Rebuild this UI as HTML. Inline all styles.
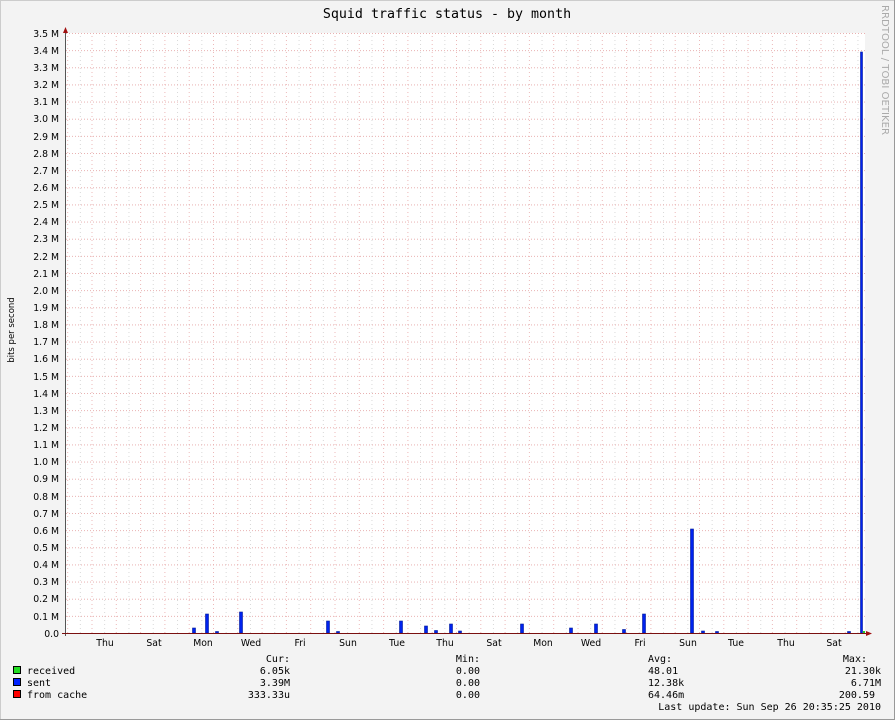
<!DOCTYPE html>
<html><head><meta charset="utf-8"><style>
html,body{margin:0;padding:0;width:895px;height:720px;overflow:hidden;background:#f3f3f3}
svg{display:block}
.m{font-family:"DejaVu Sans Mono","Liberation Mono",monospace;font-size:10px;fill:#000}
.s{font-family:"DejaVu Sans","Liberation Sans",sans-serif;font-size:9.3px;fill:#000}
</style></head><body>
<svg width="895" height="720" viewBox="0 0 895 720" xmlns="http://www.w3.org/2000/svg">
<defs>
<pattern id="vmin" patternUnits="userSpaceOnUse" x="79.85" y="0" width="24.3" height="4">
<line x1="0.5" y1="0" x2="0.5" y2="1" stroke="#d8d8d8" stroke-width="1"/>
</pattern>
<pattern id="vmaj" patternUnits="userSpaceOnUse" x="91.5" y="0" width="24.3" height="4">
<line x1="0.5" y1="0" x2="0.5" y2="1" stroke="#ecb8b8" stroke-width="1"/>
</pattern>
<pattern id="hmaj" patternUnits="userSpaceOnUse" x="0" y="33" width="3" height="17.1428">
<line x1="0" y1="0.5" x2="1" y2="0.5" stroke="#e8b0b0" stroke-width="1"/>
</pattern>
</defs>
<rect x="0" y="0" width="895" height="720" fill="#f3f3f3"/>
<rect x="0.5" y="0.5" width="894" height="719" fill="none" stroke="#cccccc"/>
<line x1="894.5" y1="0" x2="894.5" y2="720" stroke="#999"/>
<line x1="0" y1="719.5" x2="895" y2="719.5" stroke="#999"/>
<rect x="66" y="33" width="799" height="600" fill="#fff"/>
<rect x="66" y="33" width="799" height="600" fill="url(#vmin)"/>
<rect x="66" y="33" width="799" height="600" fill="url(#vmaj)"/>
<rect x="66" y="33" width="799" height="600" fill="url(#hmaj)"/>
<text class="m" x="447" y="18" text-anchor="middle" style="font-size:13.3px">Squid traffic status - by month</text>
<text transform="translate(882,5) rotate(90)" style="font-family:'DejaVu Sans',sans-serif;font-size:9.3px;fill:#aaa" textLength="130" lengthAdjust="spacingAndGlyphs">RRDTOOL / TOBI OETIKER</text>
<text transform="translate(14,330) rotate(-90)" text-anchor="middle" class="s" style="font-size:8.5px">bits per second</text>
<g class="s" text-anchor="end">
<text x="59" y="37">3.5 M</text><text x="59" y="54">3.4 M</text><text x="59" y="71">3.3 M</text><text x="59" y="88">3.2 M</text><text x="59" y="105">3.1 M</text><text x="59" y="122">3.0 M</text><text x="59" y="140">2.9 M</text><text x="59" y="157">2.8 M</text><text x="59" y="174">2.7 M</text><text x="59" y="191">2.6 M</text><text x="59" y="208">2.5 M</text><text x="59" y="225">2.4 M</text><text x="59" y="242">2.3 M</text><text x="59" y="260">2.2 M</text><text x="59" y="277">2.1 M</text><text x="59" y="294">2.0 M</text><text x="59" y="311">1.9 M</text><text x="59" y="328">1.8 M</text><text x="59" y="345">1.7 M</text><text x="59" y="362">1.6 M</text><text x="59" y="380">1.5 M</text><text x="59" y="397">1.4 M</text><text x="59" y="414">1.3 M</text><text x="59" y="431">1.2 M</text><text x="59" y="448">1.1 M</text><text x="59" y="465">1.0 M</text><text x="59" y="482">0.9 M</text><text x="59" y="500">0.8 M</text><text x="59" y="517">0.7 M</text><text x="59" y="534">0.6 M</text><text x="59" y="551">0.5 M</text><text x="59" y="568">0.4 M</text><text x="59" y="585">0.3 M</text><text x="59" y="602">0.2 M</text><text x="59" y="620">0.1 M</text><text x="59" y="637">0.0</text>
</g>
<g class="s" text-anchor="middle">
<text x="105" y="646">Thu</text><text x="154" y="646">Sat</text><text x="203" y="646">Mon</text><text x="251" y="646">Wed</text><text x="300" y="646">Fri</text><text x="348" y="646">Sun</text><text x="397" y="646">Tue</text><text x="445" y="646">Thu</text><text x="494" y="646">Sat</text><text x="543" y="646">Mon</text><text x="591" y="646">Wed</text><text x="640" y="646">Fri</text><text x="688" y="646">Sun</text><text x="736" y="646">Tue</text><text x="786" y="646">Thu</text><text x="834" y="646">Sat</text>
</g>
<g fill="#0022ee" stroke="#001a99" stroke-width="0.6">
<rect x="192.5" y="628" width="3" height="5"/>
<rect x="205.5" y="614" width="3" height="19"/>
<rect x="215.5" y="631.5" width="3" height="1.5"/>
<rect x="239.5" y="612" width="3" height="21"/>
<rect x="326.5" y="621" width="3" height="12"/>
<rect x="336.5" y="631.5" width="3" height="1.5"/>
<rect x="399.5" y="621" width="3" height="12"/>
<rect x="424.5" y="626" width="3" height="7"/>
<rect x="434.5" y="630.5" width="3" height="2.5"/>
<rect x="449.5" y="624" width="3" height="9"/>
<rect x="458.5" y="631" width="3" height="2"/>
<rect x="520.5" y="624" width="3" height="9"/>
<rect x="569.5" y="628" width="3" height="5"/>
<rect x="594.5" y="624" width="3" height="9"/>
<rect x="622.5" y="629.5" width="3" height="3.5"/>
<rect x="642.5" y="614" width="3" height="19"/>
<rect x="690.5" y="529" width="3" height="104"/>
<rect x="701.5" y="631" width="3" height="2"/>
<rect x="715.5" y="631.5" width="3" height="1.5"/>
<rect x="847.5" y="631.5" width="3" height="1.5"/>
<rect x="860.5" y="52" width="2" height="581"/>
</g>
<rect x="863" y="631" width="2" height="2" fill="#22cc22"/>
<line x1="65.5" y1="30" x2="65.5" y2="636" stroke="#555" />
<line x1="62" y1="633.5" x2="868" y2="633.5" stroke="#7a1010"/>
<polygon points="63,33 68,33 65.5,27" fill="#a01010"/>
<polygon points="866,631 866,636 872,633.5" fill="#a01010"/>
<g class="m">
<rect x="13.5" y="666.5" width="7" height="7" fill="#22dd22" stroke="#000"/>
<rect x="13.5" y="678.5" width="7" height="7" fill="#0022ff" stroke="#000"/>
<rect x="13.5" y="690.5" width="7" height="7" fill="#ff0000" stroke="#000"/>
<text x="27" y="674">received</text>
<text x="27" y="686">sent</text>
<text x="27" y="698">from cache</text>
<g text-anchor="end">
<text x="290" y="662">Cur:</text><text x="290" y="674">6.05k</text><text x="290" y="686">3.39M</text><text x="290" y="698">333.33u</text>
<text x="480" y="662">Min:</text><text x="480" y="674">0.00</text><text x="480" y="686">0.00</text><text x="480" y="698">0.00</text>
<text x="867" y="662">Max:</text><text x="881" y="674">21.30k</text><text x="881" y="686">6.71M</text><text x="875" y="698">200.59</text>
<text x="881" y="710">Last update: Sun Sep 26 20:35:25 2010</text>
</g>
<text x="648" y="662">Avg:</text><text x="648" y="674">48.01</text><text x="648" y="686">12.38k</text><text x="648" y="698">64.46m</text>
</g>
</svg>
</body></html>
